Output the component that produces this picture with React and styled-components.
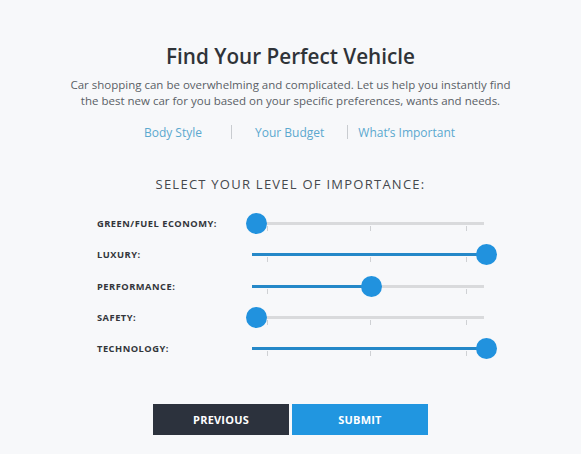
import React from 'react';
import styled, { createGlobalStyle } from 'styled-components';

const GlobalStyle = createGlobalStyle`
  html, body {
    margin: 0;
    background: #f7f8fa;
  }
  body {
    font-family: "Open Sans", "Liberation Sans", sans-serif;
  }
`

const Page = styled.div`
  width: 581px;
  height: 454px;
  padding-top: 42px;
  box-sizing: border-box;
  display: flex;
  flex-direction: column;
  align-items: center;
`
const Title = styled.h1`
  margin: 0;
  font-size: 20.7px;
  line-height: 28px;
  font-weight: 600;
  color: #2f3338;
`
const Intro = styled.p`
  margin: 7px 0 0;
  width: 460px;
  text-align: center;
  font-size: 11.5px;
  line-height: 16px;
  color: #5a5f66;
`
const Nav = styled.nav`
  margin-top: 14px;
  display: flex;
  align-items: center;
  height: 18px;
`
const NavLink = styled.a`
  font-size: 12px;
  color: #5ba8cf;
  text-decoration: none;
  padding: 0 ${p => p.$right || 0}px 0 ${p => p.$left || 0}px;
`
const Divider = styled.span`
  width: 1px;
  height: 14px;
  background: #c9ccd0;
`
const Heading = styled.h2`
  margin: 34px 0 0;
  font-size: 13px;
  line-height: 18px;
  font-weight: 400;
  letter-spacing: 1.25px;
  color: #45484d;
`
const Rows = styled.div`
  margin-top: 15px;
  display: grid;
  grid-template-columns: 155px 232px;
  grid-auto-rows: 31.25px;
  align-items: center;
`
const Label = styled.span`
  font-size: 9.3px;
  font-weight: 700;
  letter-spacing: 0.5px;
  color: #33363b;
`
const Slider = styled.div`
  position: relative;
  height: 31px;
`
const Track = styled.div`
  position: absolute;
  left: 0;
  right: 0;
  top: 14px;
  height: 3px;
  background: #d9dadc;
`
const Fill = styled.div`
  position: absolute;
  left: 0;
  top: 14px;
  height: 3px;
  background: #2588c8;
`
const Tick = styled.div`
  position: absolute;
  top: 18px;
  width: 1px;
  height: 5px;
  background: #cfd1d4;
`
const Thumb = styled.div`
  position: absolute;
  top: 5px;
  width: 21px;
  height: 21px;
  margin-left: -10.5px;
  border-radius: 50%;
  background: #2192de;
`
const Buttons = styled.div`
  margin-top: 40px;
  display: flex;
  gap: 3px;
`
const Button = styled.button`
  width: 136px;
  height: 31px;
  border: 0;
  background: ${p => p.$primary ? '#2196e0' : '#2c323d'};
  color: #fff;
  font-family: inherit;
  font-size: 11px;
  font-weight: 700;
  letter-spacing: 0.2px;
`

const prefs = [
  { name: 'GREEN/FUEL ECONOMY:', value: 0 },
  { name: 'LUXURY:', value: 1 },
  { name: 'PERFORMANCE:', value: 0.5 },
  { name: 'SAFETY:', value: 0 },
  { name: 'TECHNOLOGY:', value: 1 },
]

const ticks = [15, 118, 214]

const App = () => {
  return (
    <Page>
      <GlobalStyle />
      <Title>Find Your Perfect Vehicle</Title>
      <Intro>
        Car shopping can be overwhelming and complicated. Let us help you instantly find
        the best new car for you based on your specific preferences, wants and needs.
      </Intro>
      <Nav>
        <NavLink href="#" $left={28} $right={29}>Body Style</NavLink>
        <Divider />
        <NavLink href="#" $left={23} $right={23}>Your Budget</NavLink>
        <Divider />
        <NavLink href="#" $left={10} $right={10}>What’s Important</NavLink>
      </Nav>
      <Heading>SELECT YOUR LEVEL OF IMPORTANCE:</Heading>
      <Rows>
        {prefs.map(p => {
          const x = 4 + p.value * 230
          return (
            <React.Fragment key={p.name}>
              <Label>{p.name}</Label>
              <Slider>
                <Track />
                {ticks.map(t => <Tick key={t} style={{ left: t }} />)}
                {p.value > 0 && <Fill style={{ width: x }} />}
                <Thumb style={{ left: x }} />
              </Slider>
            </React.Fragment>
          )
        })}
      </Rows>
      <Buttons>
        <Button>PREVIOUS</Button>
        <Button $primary>SUBMIT</Button>
      </Buttons>
    </Page>
  )
}

export default App;
